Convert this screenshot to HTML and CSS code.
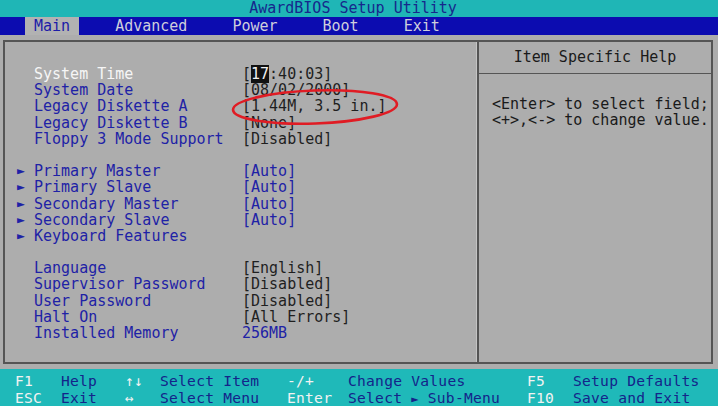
FILE: index.html
```html
<!DOCTYPE html>
<html>
<head>
  <title>AwardBIOS Setup Utility</title>
  <link rel="stylesheet" href="styles.css">
</head>
<body>
  <div class="title-bar">AwardBIOS Setup Utility</div>
  <div class="menu-bar">
    <span class="menu-item active">Main</span>
    <span class="menu-item">Advanced</span>
    <span class="menu-item">Power</span>
    <span class="menu-item">Boot</span>
    <span class="menu-item">Exit</span>
  </div>

  <div class="panel">
    <div class="frame">
      <div class="settings">
        <div class="group">
          <div class="row selected"><span class="arrow"></span><span class="label">System Time</span><span class="value">[<span class="cursor">17</span>:40:03]</span></div>
          <div class="row"><span class="arrow"></span><span class="label">System Date</span><span class="value">[08/02/2000]</span></div>
          <div class="row"><span class="arrow"></span><span class="label">Legacy Diskette A</span><span class="value">[1.44M, 3.5 in.]</span></div>
          <div class="row"><span class="arrow"></span><span class="label">Legacy Diskette B</span><span class="value">[None]</span></div>
          <div class="row"><span class="arrow"></span><span class="label">Floppy 3 Mode Support</span><span class="value">[Disabled]</span></div>
        </div>
        <div class="group">
          <div class="row"><span class="arrow">&#9658;</span><span class="label">Primary Master</span><span class="value blue">[Auto]</span></div>
          <div class="row"><span class="arrow">&#9658;</span><span class="label">Primary Slave</span><span class="value blue">[Auto]</span></div>
          <div class="row"><span class="arrow">&#9658;</span><span class="label">Secondary Master</span><span class="value blue">[Auto]</span></div>
          <div class="row"><span class="arrow">&#9658;</span><span class="label">Secondary Slave</span><span class="value blue">[Auto]</span></div>
          <div class="row"><span class="arrow">&#9658;</span><span class="label">Keyboard Features</span><span class="value"></span></div>
        </div>
        <div class="group">
          <div class="row"><span class="arrow"></span><span class="label">Language</span><span class="value">[English]</span></div>
          <div class="row"><span class="arrow"></span><span class="label">Supervisor Password</span><span class="value">[Disabled]</span></div>
          <div class="row"><span class="arrow"></span><span class="label">User Password</span><span class="value">[Disabled]</span></div>
          <div class="row"><span class="arrow"></span><span class="label">Halt On</span><span class="value">[All Errors]</span></div>
          <div class="row"><span class="arrow"></span><span class="label">Installed Memory</span><span class="value blue">256MB</span></div>
        </div>

        <!-- red marker drawn over the floppy setting -->
        <svg class="marker" width="176" height="42" viewBox="0 0 176 42">
          <ellipse cx="88" cy="21" rx="82" ry="16.5" transform="rotate(-2 88 21)" fill="none" stroke="#e01c24" stroke-width="2.6"/>
        </svg>
      </div>

      <div class="help">
        <div class="help-title">Item Specific Help</div>
        <div class="help-body">
          <div>&lt;Enter&gt; to select field;</div>
          <div>&lt;+&gt;,&lt;-&gt; to change value.</div>
        </div>
      </div>
    </div>
  </div>

  <div class="footer">
    <span class="key">F1</span><span class="desc">Help</span>
    <span class="key">&#8593;&#8595;</span><span class="desc">Select Item</span>
    <span class="key">-/+</span><span class="desc">Change Values</span>
    <span class="key">F5</span><span class="desc">Setup Defaults</span>

    <span class="key">ESC</span><span class="desc">Exit</span>
    <span class="key">&#8596;</span><span class="desc">Select Menu</span>
    <span class="key">Enter</span><span class="desc">Select <span class="tri">&#9658;</span> Sub-Menu</span>
    <span class="key">F10</span><span class="desc">Save and Exit</span>
  </div>
</body>
</html>
```

FILE: styles.css
```css
/* AwardBIOS style setup screen */
body {
  margin: 0;
  width: 718px;
  height: 406px;
  overflow: hidden;
  font-family: "DejaVu Sans Mono", "Liberation Mono", monospace;
  font-size: 15px;
  background-color: #adadad;
}

.title-bar {
  height: 17px;
  line-height: 17px;
  background-color: #1fb6b6;
  color: #16288c;
  text-align: center;
  padding-right: 12px;
  white-space: pre;
}

.menu-bar {
  display: flex;
  gap: 27px;
  height: 18px;
  line-height: 18px;
  padding-left: 25px;
  background-color: #0c0cb0;
}

.menu-item {
  padding: 0 9px;
  color: #cfcfdc;
}

.menu-item.active {
  background-color: #b2b2b2;
  color: #1c1ca8;
}

.panel {
  height: 334px;
  padding: 5px 5px 5px 3px;
  box-sizing: border-box;
  background-color: #adadad;
}

.frame {
  display: flex;
  height: 100%;
  border: 2px solid #555555;
  box-sizing: border-box;
}

.settings {
  position: relative;
  width: 472px;
  padding-top: 24px;
  padding-left: 12px;
  box-sizing: border-box;
  border-right: 1px solid #c4c4c4;
}

.group {
  margin-bottom: 16.2px;
}

.row {
  display: flex;
  height: 16.2px;
  line-height: 16.2px;
  white-space: pre;
}

.arrow {
  width: 17px;
  font-size: 13px;
  color: #1e22a6;
}

.label {
  width: 208px;
  color: #1e22a6;
}

.row.selected .label {
  color: #f6f6f6;
}

.value {
  color: #1f1f1f;
}

.value.blue {
  color: #1e22a6;
}

.cursor {
  background-color: #111111;
  color: #f0f0f0;
}

.marker {
  position: absolute;
  left: 222px;
  top: 44px;
}

.help {
  flex: 1;
  border-left: 2px solid #555555;
}

.help-title {
  height: 31px;
  line-height: 31px;
  text-align: center;
  color: #1a1a1a;
  border-bottom: 1px solid #555555;
}

.help-body {
  padding: 22px 0 0 13px;
  line-height: 16px;
  color: #1a1a1a;
  white-space: nowrap;
}

.footer {
  display: grid;
  grid-template-columns: 46px 64px 35px 127px 61px 179px 46px auto;
  height: 37px;
  padding: 3px 0 0 15px;
  box-sizing: border-box;
  font-size: 14.6px;
  letter-spacing: 0.25px;
  line-height: 17px;
  background-color: #1fb9b9;
  white-space: pre;
}

.footer .key {
  color: #f2f2f2;
}

.footer .desc {
  color: #14248a;
}

.footer .tri {
  font-size: 12px;
}
```
